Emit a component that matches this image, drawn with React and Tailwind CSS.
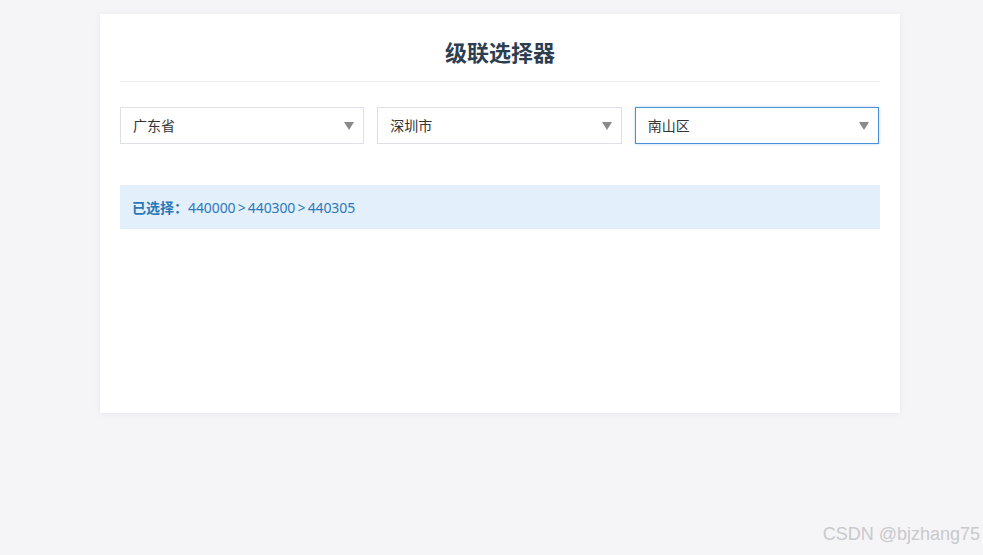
import React, { useState } from "react";

const regions = [
  {
    code: "440000",
    name: "广东省",
    children: [
      {
        code: "440300",
        name: "深圳市",
        children: [
          { code: "440305", name: "南山区" },
          { code: "440304", name: "福田区" },
          { code: "440303", name: "罗湖区" },
        ],
      },
      {
        code: "440100",
        name: "广州市",
        children: [
          { code: "440106", name: "天河区" },
          { code: "440104", name: "越秀区" },
        ],
      },
    ],
  },
  {
    code: "110000",
    name: "北京市",
    children: [
      {
        code: "110100",
        name: "市辖区",
        children: [{ code: "110105", name: "朝阳区" }],
      },
    ],
  },
];

const font = { fontFamily: '"Noto Sans", "Noto Sans CJK SC", sans-serif' };

function Select({ value, options, onChange, focused }) {
  return (
    <div className="relative">
      <select
        value={value}
        onChange={(e) => onChange(e.target.value)}
        style={font}
        className={`w-full h-[37px] appearance-none bg-white pl-[12px] pr-8 text-[14px] text-[#333] outline-none border ${
          focused ? "border-[#4a90d9] shadow-[0_0_3px_rgba(74,144,217,0.35)]" : "border-[#dcdfe6]"
        }`}
      >
        {options.map((o) => (
          <option key={o.code} value={o.code}>
            {o.name}
          </option>
        ))}
      </select>
      <span className="pointer-events-none absolute right-[10px] top-[15px] w-0 h-0 border-l-[5px] border-r-[5px] border-t-[8px] border-l-transparent border-r-transparent border-t-[#8a8a8a]" />
    </div>
  );
}

export default function App() {
  const [province, setProvince] = useState("440000");
  const [city, setCity] = useState("440300");
  const [district, setDistrict] = useState("440305");

  const p = regions.find((r) => r.code === province);
  const c = p.children.find((r) => r.code === city) || p.children[0];

  return (
    <div className="w-[983px] h-[555px] bg-[#f5f5f7] relative overflow-hidden" style={font}>
      <div className="pt-[14px] pl-[100px]">
        <div className="w-[800px] h-[399px] bg-white shadow-[0_1px_6px_rgba(0,0,0,0.06)] px-[20px] pt-[20px]">
          {/* title */}
          <div className="border-b border-[#eceef0] pb-[10px]">
            <h2 className="text-center text-[22px] leading-[37px] font-bold text-[#2c3e50]">级联选择器</h2>
          </div>

          {/* selects */}
          <div className="grid grid-cols-3 gap-[13px] mt-[25px] pr-[1px]">
            <Select
              value={province}
              options={regions}
              onChange={(v) => {
                const np = regions.find((r) => r.code === v);
                setProvince(v);
                setCity(np.children[0].code);
                setDistrict(np.children[0].children[0].code);
              }}
            />
            <Select
              value={c.code}
              options={p.children}
              onChange={(v) => {
                const nc = p.children.find((r) => r.code === v);
                setCity(v);
                setDistrict(nc.children[0].code);
              }}
            />
            <Select value={district} options={c.children} onChange={setDistrict} focused />
          </div>

          {/* result */}
          <div className="mt-[41px] h-[44px] bg-[#e3f0fc] flex items-center px-[12px] text-[14px] text-[#2a78b8]">
            <span className="font-bold">已选择：</span>
            <span className="tracking-[-0.1px]">
              {province}&thinsp;&gt;&thinsp;{c.code}&thinsp;&gt;&thinsp;{district}
            </span>
          </div>
        </div>
      </div>

      <div
        className="absolute right-[3px] bottom-[7px] text-[18px] text-[#c9c9cc]"
        style={{ fontFamily: '"Liberation Sans", Arial, sans-serif' }}
      >
        CSDN @bjzhang75
      </div>
    </div>
  );
}
